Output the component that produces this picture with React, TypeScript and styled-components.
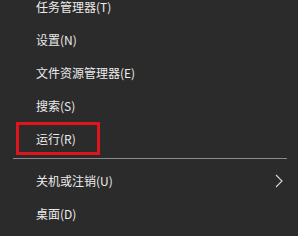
import React from "react";
import styled, { createGlobalStyle } from "styled-components";

const Global = createGlobalStyle`
  html, body {
    margin: 0;
    padding: 0;
    background: #2b2b2b;
    overflow: hidden;
  }
  body {
    width: 298px;
    height: 236px;
  }
`;

const Screen = styled.div`
  width: 298px;
  height: 236px;
  background: #2b2b2b;
  overflow: hidden;
  font-family: "Noto Sans CJK SC", "Microsoft YaHei", sans-serif;
`;

const Menu = styled.ul`
  list-style: none;
  margin: -10px 0 0 0;
  padding: 0;
  display: flex;
  flex-direction: column;
`;

const Item = styled.li`
  position: relative;
  height: 33px;
  display: flex;
  align-items: center;
  padding: 0 15px 0 36px;
  color: #ececec;
  font-size: 12px;
  line-height: 1;
  white-space: nowrap;
`;

const Label = styled.span`
  flex: 1;
`;

const Highlight = styled.span`
  position: absolute;
  left: 16px;
  top: 0;
  width: 84px;
  height: 33px;
  box-sizing: border-box;
  border: 3px solid #e0141c;
  pointer-events: none;
`;

const Separator = styled.li`
  height: 1px;
  margin: 3px 11px 5px 13px;
  background: #8a8a8a;
`;

const Chevron = () => (
  <svg width="8" height="14" viewBox="0 0 8 14" fill="none">
    <path d="M1 1 L7 7 L1 13" stroke="#d8d8d8" strokeWidth="1.1" />
  </svg>
);

type Entry = { label: string; highlighted?: boolean; submenu?: boolean } | "sep";

const entries: Entry[] = [
  { label: "任务管理器(T)" },
  { label: "设置(N)" },
  { label: "文件资源管理器(E)" },
  { label: "搜索(S)" },
  { label: "运行(R)", highlighted: true },
  "sep",
  { label: "关机或注销(U)", submenu: true },
  { label: "桌面(D)" },
];

export default function App() {
  return (
    <Screen>
      <Global />
      <Menu>
        {entries.map((e, i) =>
          e === "sep" ? (
            <Separator key={i} />
          ) : (
            <Item key={i}>
              <Label>{e.label}</Label>
              {e.submenu && <Chevron />}
              {e.highlighted && <Highlight />}
            </Item>
          )
        )}
      </Menu>
    </Screen>
  );
}
